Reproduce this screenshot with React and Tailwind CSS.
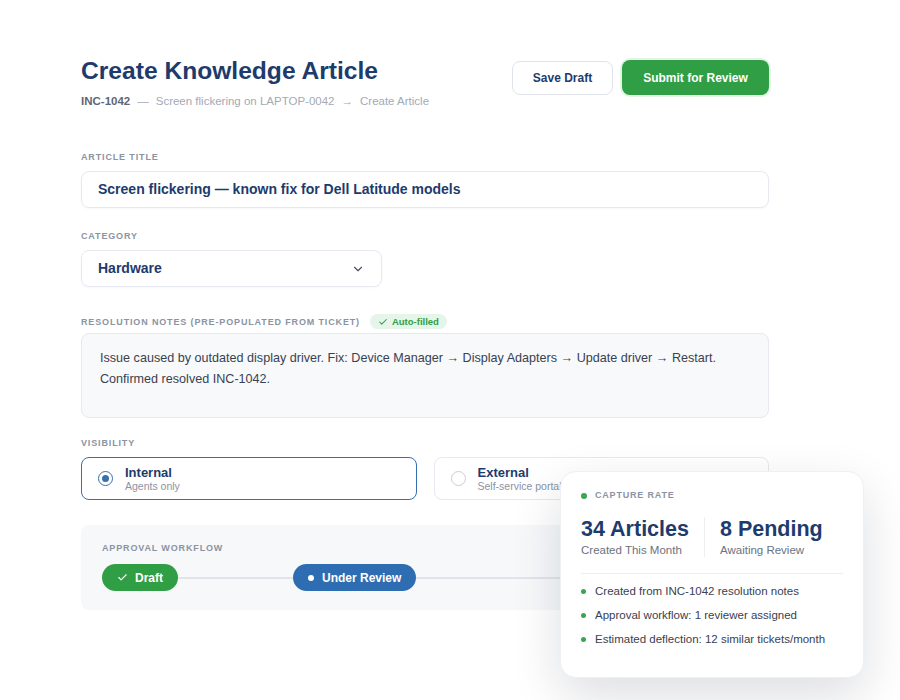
import React from 'react';
import { Check, ChevronDown } from 'lucide-react';

const Label = ({ children }) => (
  <div className="text-[9px] leading-[12px] font-bold uppercase tracking-[0.095em] text-[#8b93a3]">{children}</div>
);

const RadioCard = ({ selected, title, sub }) => (
  <div
    className={
      'flex-1 h-[43px] rounded-lg flex items-center gap-3 px-4 bg-white ' +
      (selected ? 'border-[1.5px] border-[#3670ad]' : 'border border-[#e6e9ef]')
    }
  >
    {selected ? (
      <span className="w-[15px] h-[15px] rounded-full border-[1.5px] border-[#3670ad] flex items-center justify-center">
        <span className="w-[7px] h-[7px] rounded-full bg-[#3670ad]"></span>
      </span>
    ) : (
      <span className="w-[15px] h-[15px] rounded-full border-[1.5px] border-[#c9ced7]"></span>
    )}
    <div className="leading-none">
      <div className="text-[13px] font-bold text-[#1d3b6c]">{title}</div>
      <div className="text-[10.5px] text-[#8b93a3] mt-[2px]">{sub}</div>
    </div>
  </div>
);

const Bullet = ({ children }) => (
  <div className="flex items-center gap-[9px] text-[11.5px] leading-[16px] text-[#3a4150]">
    <span className="w-[5px] h-[5px] rounded-full bg-[#3aa64f]"></span>
    <span>{children}</span>
  </div>
);

export default function App() {
  return (
    <div className="relative w-[900px] h-[700px] bg-white overflow-hidden font-['Liberation_Sans',Arial,sans-serif]">
      <div className="w-[688px] ml-[81px] pt-[56px]">
        {/* Header */}
        <div className="flex items-start justify-between">
          <div>
            <h1 className="text-[24.6px] leading-[30px] font-bold text-[#1d3b6c]">Create Knowledge Article</h1>
            <div className="mt-[7px] text-[11.5px] flex items-center gap-[7px] text-[#a3a9b5]">
              <span className="font-bold text-[#5f6674]">INC-1042</span>
              <span>—</span>
              <span>Screen flickering on LAPTOP-0042</span>
              <span>→</span>
              <span>Create Article</span>
            </div>
          </div>
          <div className="flex items-center gap-[9px] mt-[4px]">
            <button className="h-[34px] w-[101px] rounded-lg border border-[#dfe3ea] bg-white text-[12px] font-bold text-[#1d3b6c]">
              Save Draft
            </button>
            <button className="h-[35px] w-[147px] rounded-lg bg-[#2f9e44] text-[12px] font-bold text-white shadow-[0_0_0_2px_#e3f4e6]">
              Submit for Review
            </button>
          </div>
        </div>

        {/* Article title */}
        <div className="mt-[41px]">
          <Label>Article Title</Label>
          <div className="mt-[8px] h-[37px] rounded-lg border border-[#e6e9ef] flex items-center px-4 shadow-[0_1px_2px_rgba(15,23,42,0.03)]">
            <span className="text-[14px] font-bold text-[#1d3b6c]">Screen flickering — known fix for Dell Latitude models</span>
          </div>
        </div>

        {/* Category */}
        <div className="mt-[22px]">
          <Label>Category</Label>
          <div className="mt-[8px] w-[301px] h-[37px] rounded-lg border border-[#e6e9ef] flex items-center justify-between px-4 shadow-[0_1px_2px_rgba(15,23,42,0.03)]">
            <span className="text-[14px] font-bold text-[#1d3b6c]">Hardware</span>
            <ChevronDown className="w-[14px] h-[14px] text-[#4a5160]" strokeWidth={2} />
          </div>
        </div>

        {/* Resolution notes */}
        <div className="mt-[27px]">
          <div className="flex items-center gap-[10px]">
            <Label>Resolution Notes (Pre-populated from ticket)</Label>
            <span className="flex items-center gap-[4px] h-[15px] px-[8px] rounded-full bg-[#e6f5e9] text-[9.5px] font-bold text-[#2f9e44]">
              <Check className="w-[10px] h-[10px]" strokeWidth={2.5} />
              Auto-filled
            </span>
          </div>
          <div className="mt-[4px] h-[85px] rounded-lg border border-[#e6e9ef] bg-[#f7f9fb] px-[18px] pt-[14px] text-[12.6px] leading-[21px] text-[#3a4150]">
            Issue caused by outdated display driver. Fix: Device Manager → Display Adapters → Update driver → Restart. Confirmed resolved INC-1042.
          </div>
        </div>

        {/* Visibility */}
        <div className="mt-[19px]">
          <Label>Visibility</Label>
          <div className="mt-[8px] flex gap-[17px]">
            <RadioCard selected title="Internal" sub="Agents only" />
            <RadioCard title="External" sub="Self-service portal" />
          </div>
        </div>

        {/* Approval workflow */}
        <div className="mt-[25px] h-[85px] rounded-lg bg-[#f6f8fa] px-[21px] pt-[17px]">
          <Label>Approval Workflow</Label>
          <div className="mt-[10px] flex items-center">
            <span className="h-[27px] px-[15px] rounded-full bg-[#2f9e44] text-white text-[12px] font-bold flex items-center gap-[7px]">
              <Check className="w-[11px] h-[11px]" strokeWidth={2.5} />
              Draft
            </span>
            <span className="w-[115px] h-[2px] bg-[#e1e4ea]"></span>
            <span className="h-[27px] px-[15px] rounded-full bg-[#2f6db2] text-white text-[12px] font-bold flex items-center gap-[8px]">
              <span className="w-[6px] h-[6px] rounded-full bg-white"></span>
              Under Review
            </span>
            <span className="flex-1 h-[2px] bg-[#e1e4ea]"></span>
            <span className="h-[27px] px-[15px] rounded-full bg-[#e8ebf0] text-[#8b93a3] text-[12px] font-bold flex items-center">
              Published
            </span>
          </div>
        </div>
      </div>

      {/* Floating capture rate card */}
      <div className="absolute left-[560px] top-[471px] w-[304px] h-[207px] rounded-2xl bg-white border border-[#eef0f4] shadow-[0_18px_50px_rgba(15,23,42,0.14)] px-[20px] pt-[17px]">
        <div className="h-[14px] flex items-center gap-[8px]">
          <span className="w-[6px] h-[6px] rounded-full bg-[#3aa64f]"></span>
          <span className="text-[9px] font-bold uppercase tracking-[0.09em] text-[#8b93a3]">Capture Rate</span>
        </div>
        <div className="mt-[14px] flex">
          <div className="pr-[15px] border-r border-[#eceef2]">
            <div className="text-[21.5px] leading-[24px] font-bold text-[#1d3b6c]">34 Articles</div>
            <div className="mt-[2px] text-[11.5px] leading-[14px] text-[#6b7280]">Created This Month</div>
          </div>
          <div className="pl-[15px]">
            <div className="text-[21.5px] leading-[24px] font-bold text-[#1d3b6c]">8 Pending</div>
            <div className="mt-[2px] text-[11.5px] leading-[14px] text-[#6b7280]">Awaiting Review</div>
          </div>
        </div>
        <div className="mt-[16px] border-t border-[#eceef2]"></div>
        <div className="mt-[9px] flex flex-col gap-[8px]">
          <Bullet>Created from INC-1042 resolution notes</Bullet>
          <Bullet>Approval workflow: 1 reviewer assigned</Bullet>
          <Bullet>Estimated deflection: 12 similar tickets/month</Bullet>
        </div>
      </div>
    </div>
  );
}
